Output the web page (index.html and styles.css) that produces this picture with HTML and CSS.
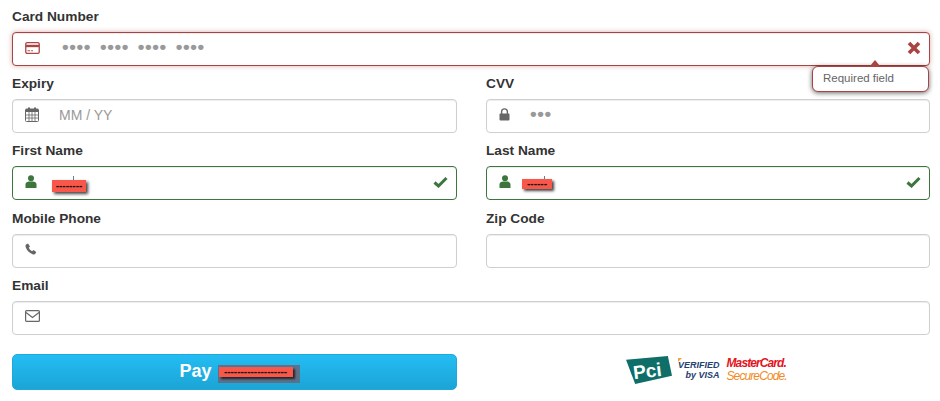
FILE: index.html
```html
<!DOCTYPE html>
<html lang="en">
<head>
    <meta charset="UTF-8">
    <title>Payment</title>
    <link rel="stylesheet" href="styles.css">
</head>
<body>
    <form class="pay-form">
        <div class="field wide">
            <label>Card Number</label>
            <div class="box error">
                <span class="icon">
                    <svg width="15" height="12" viewBox="0 0 16 13"><rect x="0.7" y="0.7" width="14.6" height="11.6" rx="1.5" fill="none" stroke="currentColor" stroke-width="1.4"/><rect x="1" y="3" width="14" height="2.6" fill="currentColor"/><rect x="2.5" y="9" width="3" height="1" fill="currentColor"/><rect x="6.5" y="9" width="2" height="1" fill="currentColor"/></svg>
                </span>
                <input class="dots" placeholder="•••• •••• •••• ••••">
                <svg class="state" width="14" height="14" viewBox="0 0 14 14"><path d="M2 2 L12 12 M12 2 L2 12" stroke="#a94442" stroke-width="3.6"/></svg>
            </div>
            <div class="tip">Required field</div>
        </div>

        <div class="field">
            <label>Expiry</label>
            <div class="box">
                <span class="icon">
                    <svg width="14" height="15" viewBox="0 0 14 15"><rect x="0.5" y="2" width="13" height="12.5" rx="1" fill="none" stroke="currentColor"/><rect x="1" y="2" width="12" height="3" fill="currentColor"/><rect x="3" y="0.5" width="2" height="3" fill="currentColor"/><rect x="9" y="0.5" width="2" height="3" fill="currentColor"/><path d="M1 8 H13 M1 11 H13 M4 5 V14 M7 5 V14 M10 5 V14" stroke="currentColor" stroke-width="0.8"/></svg>
                </span>
                <input placeholder="MM / YY">
            </div>
        </div>
        <div class="field">
            <label>CVV</label>
            <div class="box">
                <span class="icon">
                    <svg width="11" height="13" viewBox="0 0 11 13"><path d="M2.6 6 V3.8 a2.9 2.9 0 0 1 5.8 0 V6" fill="none" stroke="currentColor" stroke-width="1.4"/><rect x="0.5" y="5.5" width="10" height="7" rx="1" fill="currentColor"/></svg>
                </span>
                <input class="dots cvv" placeholder="•••">
            </div>
        </div>

        <div class="field">
            <label>First Name</label>
            <div class="box valid">
                <span class="icon">
                    <svg width="12" height="13" viewBox="0 0 12 13"><circle cx="6" cy="3.2" r="3" fill="currentColor"/><path d="M0.5 13 V9.5 C0.5 7.5 2.5 6.6 4 6.6 H8 C9.5 6.6 11.5 7.5 11.5 9.5 V13 Z" fill="currentColor"/></svg>
                </span>
                <span class="redact name-first">--------</span>
                <svg class="state" width="15" height="12" viewBox="0 0 15 12"><path d="M1.5 6.5 L5.5 10 L13.5 2" fill="none" stroke="#3c763d" stroke-width="3"/></svg>
            </div>
        </div>
        <div class="field">
            <label>Last Name</label>
            <div class="box valid">
                <span class="icon">
                    <svg width="12" height="13" viewBox="0 0 12 13"><circle cx="6" cy="3.2" r="3" fill="currentColor"/><path d="M0.5 13 V9.5 C0.5 7.5 2.5 6.6 4 6.6 H8 C9.5 6.6 11.5 7.5 11.5 9.5 V13 Z" fill="currentColor"/></svg>
                </span>
                <span class="redact name-last">------</span>
                <svg class="state" width="15" height="12" viewBox="0 0 15 12"><path d="M1.5 6.5 L5.5 10 L13.5 2" fill="none" stroke="#3c763d" stroke-width="3"/></svg>
            </div>
        </div>

        <div class="field">
            <label>Mobile Phone</label>
            <div class="box">
                <span class="icon">
                    <svg width="12" height="12" viewBox="0 0 12 12"><path d="M1 1.6 L3 0.6 L5 3.4 L3.8 4.8 C4.4 6.2 5.6 7.5 7.1 8.2 L8.5 7 L11.2 9 L10.2 11 C9.6 11.6 8.6 11.6 7.6 11.2 C4.4 10 1.8 7.2 0.7 4.2 C0.4 3.2 0.5 2.2 1 1.6 Z" fill="currentColor"/></svg>
                </span>
                <input>
            </div>
        </div>
        <div class="field">
            <label>Zip Code</label>
            <div class="box">
                <input>
            </div>
        </div>

        <div class="field wide">
            <label>Email</label>
            <div class="box">
                <span class="icon">
                    <svg width="15" height="12" viewBox="0 0 15 12"><rect x="0.6" y="0.6" width="13.8" height="10.8" rx="1" fill="none" stroke="currentColor" stroke-width="1.2"/><path d="M1 2.5 L7.5 7.5 L14 2.5" fill="none" stroke="currentColor" stroke-width="1.2"/></svg>
                </span>
                <input>
            </div>
        </div>

        <div class="actions">
            <button type="button" class="pay">Pay <span class="redact amount">-------------------</span></button>
            <div class="logos">
                <div class="pci"><span>Pci</span></div>
                <div class="visa"><i>VERIFIED</i><i class="by">by VISA</i></div>
                <div class="mc"><i>MasterCard.</i><i class="sc">SecureCode.</i></div>
            </div>
        </div>
    </form>
</body>
</html>
```

FILE: styles.css
```css
* {
    box-sizing: border-box;
}

body {
    margin: 0;
    background-color: #fff;
    font-family: "Liberation Sans", Arial, sans-serif;
    color: #333;
}

.pay-form {
    display: grid;
    grid-template-columns: 445px 444px;
    column-gap: 29px;
    width: 930px;
    padding: 6px 0 0 12px;
}

.field {
    position: relative;
    margin-bottom: 7.2px;
}

.wide {
    grid-column: 1 / 3;
}

label {
    display: block;
    height: 20px;
    line-height: 21px;
    margin-bottom: 6px;
    font-size: 13.7px;
    font-weight: bold;
}

.box {
    display: flex;
    align-items: center;
    height: 34px;
    border: 1px solid #cfcfcf;
    border-radius: 4px;
    background-color: #fff;
    box-shadow: inset 0 1px 1px rgba(0, 0, 0, 0.075);
}

.icon {
    display: flex;
    align-items: center;
    flex: none;
    width: 34px;
    margin-top: -3px;
    padding-left: 12px;
    color: #666;
}

.box input {
    flex: 1;
    min-width: 0;
    height: 100%;
    padding: 0 12px 2px;
    border: none;
    outline: none;
    background: transparent;
    font-family: inherit;
    font-size: 14px;
}

.box input::placeholder {
    color: #999;
    opacity: 1;
}

.box input.dots {
    padding-left: 15px;
    padding-bottom: 3px;
}

.box input.cvv {
    padding-left: 9px;
}

.box input.dots::placeholder {
    font-size: 19px;
    font-weight: bold;
    letter-spacing: 0.6px;
    word-spacing: 3px;
}

.state {
    flex: none;
    margin: -3px 8px 0 auto;
}

.error {
    border: 1.5px solid #a94442;
    box-shadow: inset 0 1px 1px rgba(0, 0, 0, 0.075), 0 0 5px rgba(169, 68, 66, 0.45);
}

.error .icon {
    color: #a94442;
}

.valid {
    border-color: #3c763d;
}

.valid .icon {
    color: #3c763d;
}

.tip {
    position: absolute;
    top: 60px;
    right: 1px;
    width: 117px;
    height: 26px;
    padding-left: 10px;
    border: 1.5px solid #a94442;
    border-radius: 6px;
    background-color: #fff;
    box-shadow: 0 1px 5px rgba(0, 0, 0, 0.6);
    font-size: 11.5px;
    line-height: 23px;
    color: #666;
}

.tip::before {
    content: "";
    position: absolute;
    top: -7px;
    left: 57px;
    border-left: 5px solid transparent;
    border-right: 5px solid transparent;
    border-bottom: 6px solid #a94442;
}

.redact {
    display: block;
    position: relative;
    background-color: #f9574a;
    box-shadow: 2px 2px 3px rgba(0, 0, 0, 0.75);
    color: #111;
    font-size: 10px;
    font-weight: bold;
    text-align: center;
}

/* the caret pokes out above the redaction */
.name-first::before,
.name-last::before {
    content: "";
    position: absolute;
    top: -4px;
    width: 1px;
    height: 4px;
    background-color: #5d7f9c;
}

.name-first {
    width: 34px;
    height: 12px;
    margin: 5px 0 0 5px;
    line-height: 11px;
}

.name-first::before {
    left: 21px;
}

.name-last {
    width: 30px;
    height: 10px;
    margin: 2px 0 0 1px;
    line-height: 9px;
}

.name-last::before {
    left: 22px;
    height: 3px;
    top: -3px;
}

.actions {
    grid-column: 1 / 3;
    display: grid;
    grid-template-columns: 445px 444px;
    column-gap: 29px;
    margin-top: 12px;
}

.pay {
    display: flex;
    justify-content: center;
    align-items: center;
    height: 36px;
    padding: 0 0 0 3px;
    border: 1px solid #1da9dd;
    border-radius: 5px;
    background: linear-gradient(#23bdf3, #1ca4d6);
    color: #fff;
    font-family: inherit;
    font-size: 18px;
    font-weight: bold;
}

.amount {
    width: 74px;
    height: 10px;
    margin-left: 7px;
    box-shadow: 2px 2px 2px #2a2226, 3px 2px 0 4px rgba(110, 95, 110, 0.75);
    line-height: 9px;
}

.logos {
    display: flex;
    align-items: center;
    margin: 0 0 4px 140px;
}

.pci {
    flex: none;
    width: 46px;
    height: 28px;
    padding-left: 7px;
    background-color: #0f6f68;
    clip-path: polygon(0 14%, 91% 0, 100% 71%, 20% 100%);
    color: #fff;
    font-size: 19px;
    font-weight: bold;
    line-height: 29px;
}

.pci span {
    display: block;
    transform: rotate(-7deg);
}

.visa {
    position: relative;
    display: flex;
    flex-direction: column;
    align-items: flex-end;
    margin-left: 6px;
    color: #23406f;
    font-size: 9px;
    font-weight: bold;
    line-height: 10px;
}

/* gold tick over the V */
.visa::before {
    content: "";
    position: absolute;
    top: -2px;
    left: 0;
    border-left: 4px solid #e9a93a;
    border-bottom: 4px solid transparent;
}

.mc {
    display: flex;
    flex-direction: column;
    margin-left: 7px;
    color: #e3141c;
    font-size: 12px;
    font-weight: bold;
    line-height: 13px;
    letter-spacing: -0.9px;
}

.sc {
    color: #f18a1e;
    font-weight: normal;
    letter-spacing: -0.9px;
}
```
